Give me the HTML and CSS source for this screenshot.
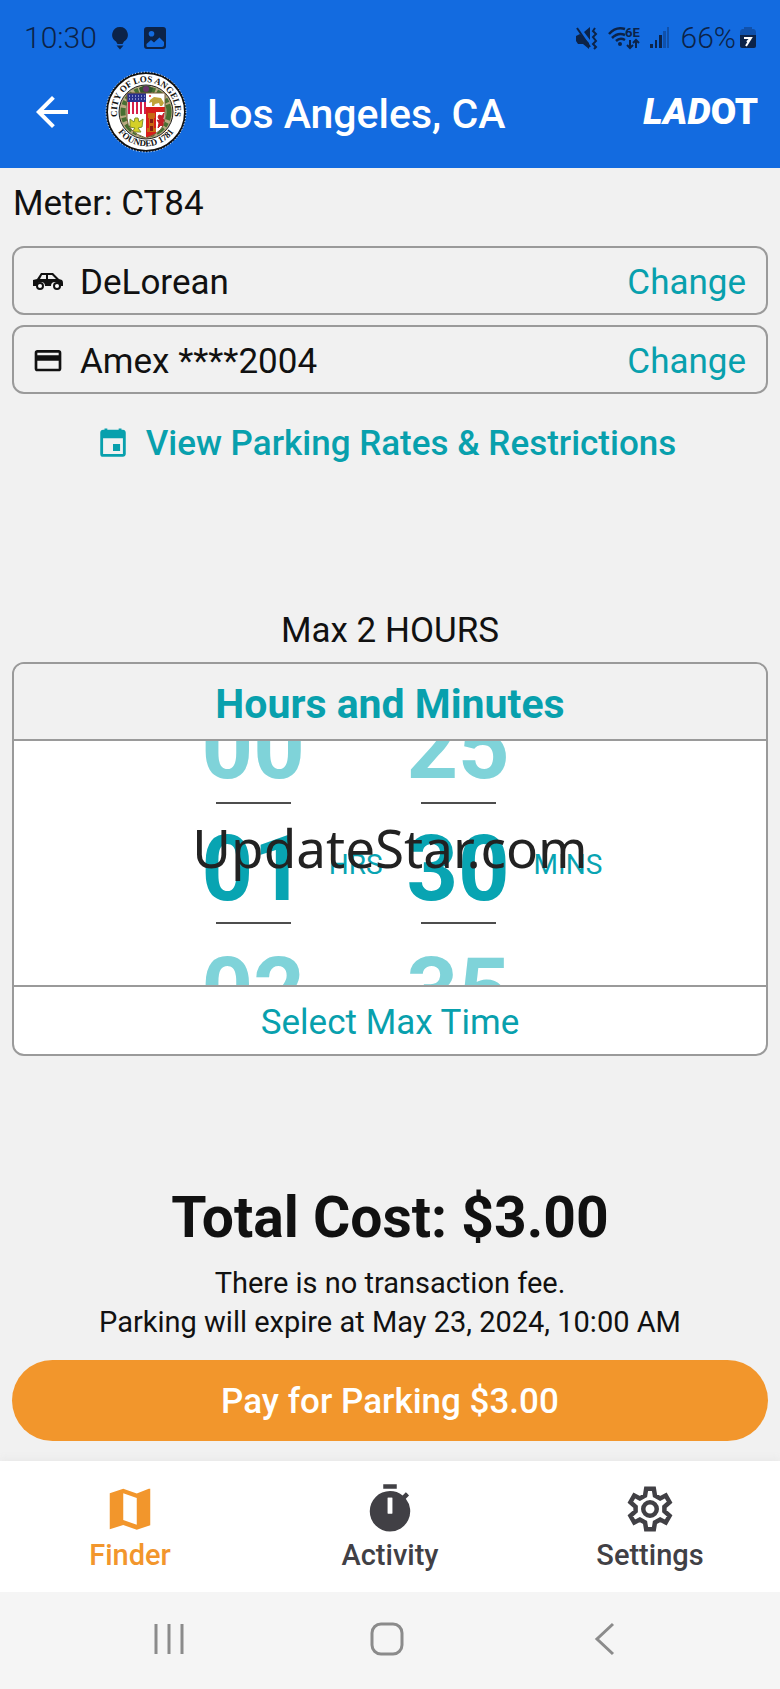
FILE: index.html
```html
<!DOCTYPE html>
<html lang="en">
<head>
<meta charset="utf-8">
<meta name="viewport" content="width=device-width, initial-scale=1">
<title>Pay for Parking</title>
<link rel="stylesheet" href="styles.css">
</head>
<body>
<div class="app">
  <header class="header">
    <div class="status">
      <div class="status-side">
        <span class="clock">10:30</span>
        <svg class="status-icon bulb" width="16" height="24" viewBox="0 0 16 24"><path d="M8 1a7.800 7.800 0 0 0-4 14.500L5.500 18h5L12 15.500A7.800 7.800 0 0 0 8 1zM4.500 19.500h7L8 23.500z"/></svg>
        <svg class="status-icon" width="24" height="24" viewBox="0 0 24 24"><path fill-rule="evenodd" d="M4 1h16a3 3 0 0 1 3 3v16a3 3 0 0 1-3 3H4a3 3 0 0 1-3-3V4a3 3 0 0 1 3-3zM3.500 19.500c0 1 .5 1.500 1.500 1.500h14c1 0 2-.7 2-2v-3l-4.500-4.500-5.500 5-3-2.500-4.500 4zM8.500 5a2.800 2.800 0 1 0 0 5.600 2.800 2.800 0 0 0 0-5.600z"/></svg>
      </div>
      <div class="status-side status-right">
        <svg class="status-icon" width="24" height="24" viewBox="0 0 24 24"><path d="M1 10l4-2 9 9v6l-6-5H3l-2-3zM9 6l6-5v13z"/><path d="M2 2l13 19" fill="none" stroke="#0c2348" stroke-width="2"/><path d="M20 2l-2 3 3 3-3 3 3 4-3 3 3 3-2 2" fill="none" stroke="#0c2348" stroke-width="2"/></svg>
        <svg class="status-icon wifi" width="32" height="24" viewBox="0 0 32 24"><g fill="none" stroke="#0c2348" stroke-width="2.500"><path d="M1 8Q8 0 17 3M4 12q6-6 13-3M8 15q4-4 9-1"/><path d="M22 14v8m-3-3 3 3 3-3M28 22v-8m-3 3 3-3 3 3" stroke-width="2"/></g><circle cx="12" cy="18" r="2"/><text x="17" y="11" font-size="13">6E</text></svg>
        <svg class="status-icon" width="21" height="24" viewBox="0 0 21 24"><path d="M1 18h3v4H1zM6 14h2v8H6zM10 9h3v13h-3z"/><path d="M14 5h3v17h-3zM18 1h2v21h-2z" opacity=".35"/></svg>
        <span class="charge">
          <span class="clock">66%</span>
          <svg class="status-icon" width="16" height="24" viewBox="0 0 16 24"><path d="M4 1h8v2h2q2 1 2 3v4H0V6q0-2 2-3h2z" opacity=".35"/><path d="M0 9h16v11q0 2-2 2H2q-2 0-2-2z"/><path d="M4 12h7l-5 8M11 12l-4 4" fill="none" stroke="#fff" stroke-width="2"/></svg>
        </span>
      </div>
    </div>
    <div class="titlebar">
      <button class="back" type="button" aria-label="Back"><svg width="48" height="48" viewBox="0 0 24 24" fill="#fff"><path d="M20 11H7.830l5.590-5.590L12 4l-8 8 8 8 1.410-1.410L7.830 13H20z"/></svg></button>
      <svg class="seal" width="82" height="82" viewBox="0 0 82 82" role="img" aria-label="Seal of the City of Los Angeles">
        <defs>
          <path id="arc-top" d="M12.500 45.500A29 29 0 1 1 69.500 45.500"/>
          <path id="arc-bottom" d="M7.500 49A34.500 34.500 0 0 0 74.500 49"/>
          <clipPath id="shield"><path d="M22 22h38v25q0 14-19 20Q22 61 22 47z"/></clipPath>
        </defs>
        <circle cx="41" cy="41" r="39" fill="#fff" stroke="#111" stroke-width="2"/>
        <circle cx="41" cy="41" r="40" fill="none" stroke="#fff" stroke-dasharray="1 2"/>
        <circle cx="41" cy="41" r="27" fill="#b9a982" stroke="#222"/>
        <circle cx="41" cy="41" r="23" fill="none" stroke="#466f32" stroke-width="5" stroke-dasharray="8 3 4 2"/>
        <path d="M34 17q7-5 14 0l-2 6H36z" fill="#31552c"/><circle cx="41" cy="18" r="3" fill="#69336b"/>
        <g clip-path="url(#shield)">
          <path d="M22 22h38v46H22z" fill="#fff"/>
          <path d="M24 30v13M28 30v13M32 30v13M36 30v13M40 30v13" stroke="#d6204a" stroke-width="2"/>
          <path d="M22 22h19v9H22z" fill="#28308d"/>
          <path d="M24 25h16M24 28h16" stroke="#dfe3ff" stroke-dasharray="1 2"/>
          <path d="M45 29l4-3 7 1 3 5-2 3h-2l-1-3-4 1-1 2h-2v-4l-3 1z" fill="#c0a43a"/>
          <circle cx="45" cy="25" r="1" fill="#d22"/>
          <path d="M41 36h20v5H51v25H41z" fill="#d81e1a"/>
          <path d="M43 42h7v5h-1v10h2v4h-9v-4h2V47h-1z" fill="#c76a13"/><path d="M45 48h3v4h-3zM45 55h3v5h-3z" fill="#861d13"/>
          <path d="M54 44l3 1 2-3-1 6 2 2-2 1 1 6-3-3-3 3 1-5-2-3 3 1-2-4z" fill="#c31f28" stroke="#c31f28"/>
          <path d="M25 48l4 3 1-4h3l1 4 4-3-1 8-4 1 3 4H27l3-4-5-1z" fill="#d4d128" stroke="#7f902b"/>
        </g>
        <path d="M22 22h38v25q0 14-19 20Q22 61 22 47z" fill="none" stroke="#785c38"/>
        <text class="seal-text"><textPath href="#arc-top" startOffset="50%">CITY OF LOS ANGELES</textPath></text>
        <text class="seal-text"><textPath href="#arc-bottom" startOffset="50%">FOUNDED 1781</textPath></text>
      </svg>
      <h1 class="title">Los Angeles, CA</h1>
      <span class="ladot"><i>LAD</i>OT</span>
    </div>
  </header>

  <main class="content">
    <p class="meter">Meter: CT84</p>
    <section class="option">
      <svg width="32" height="32" viewBox="0 0 32 32"><path fill="#111" fill-rule="evenodd" d="M1 13l4-1 4-6h12l6 6 3 1q1 1 1 3v3h-4a4 4 0 0 0-8 0h-6a4 4 0 0 0-8 0H1zM10 8l-2 4h6V8zm6 0v4h8l-4-4z"/><g fill="#fff" stroke="#111" stroke-width="2"><circle cx="8" cy="19" r="3"/><circle cx="25" cy="19" r="3"/></g></svg>
      <span class="option-name">DeLorean</span>
      <button class="link" type="button" aria-label="Change vehicle">Change</button>
    </section>
    <section class="option">
      <svg width="32" height="32" viewBox="0 0 24 24"><path fill="#111" d="M20 3H4c-1.110 0-1.990.890-1.990 2L2 17c0 1.110.890 2 2 2h16c1.110 0 2-.890 2-2V5c0-1.110-.890-2-2-2zm0 14H4v-6h16v6zm0-10H4V5h16v2z"/></svg>
      <span class="option-name">Amex ****2004</span>
      <button class="link" type="button" aria-label="Change payment card">Change</button>
    </section>
    <a class="rates" href="#rates">
      <svg width="34" height="34" viewBox="0 0 24 24" fill="#08a0ad"><path d="M17 12h-5v5h5v-5zM16 1v1H8V1H6v1H5c-1.110 0-1.990.9-1.990 2L3 19a2 2 0 0 0 2 2h14c1.100 0 2-.9 2-2V4c0-1.100-.9-2-2-2h-1V1h-2zm3 18H5V8h14v11z"/></svg>
      <span>View Parking Rates &amp; Restrictions</span>
    </a>

    <p class="max">Max 2 HOURS</p>
    <section class="picker">
      <h2 class="picker-title">Hours and Minutes</h2>
      <div class="wheels">
        <ul class="wheel" aria-label="Hours"><li>00</li><li class="current">01</li><li>02</li></ul>
        <span class="unit">HRS</span>
        <ul class="wheel" aria-label="Minutes"><li>25</li><li class="current">30</li><li>35</li></ul>
        <span class="unit">MINS</span>
        <span class="watermark">UpdateStar.com</span>
      </div>
      <button class="select-max" type="button">Select Max Time</button>
    </section>

    <p class="total">Total Cost: $3.00</p>
    <p class="note">There is no transaction fee.<br>Parking will expire at May 23, 2024, 10:00 AM</p>
    <button class="pay" type="button">Pay for Parking $3.00</button>
  </main>

  <nav class="tabs" aria-label="Main">
    <a class="tab active" href="#finder"><svg width="54" height="54" viewBox="0 0 24 24" fill="currentColor"><path d="M20.500 3l-.16.030L15 5.100 9 3 3 5.020V21l6-1.900 6 2.100 6-2V3zM15 19l-6-2.110V5l6 2.110V19z"/></svg><span>Finder</span></a>
    <a class="tab" href="#activity"><svg width="54" height="54" viewBox="0 0 24 24" fill="currentColor"><path d="M15 1H9v2h6V1zm-4 13h2V7h-2v7zm8.030-6.610 1.420-1.420c-.430-.510-.900-.990-1.410-1.410l-1.420 1.420A8.960 8.960 0 0 0 12 4a9 9 0 0 0 0 18 9 9 0 0 0 7.030-14.610z" fill-rule="evenodd"/><path d="M11 7h2v7h-2z" fill="#fff"/></svg><span>Activity</span></a>
    <a class="tab" href="#settings"><svg width="54" height="54" viewBox="0 0 24 24" fill="none" stroke="currentColor" stroke-width="2"><path d="M10.300 3h3.400l.5 3 2.300 1.300L19 6l1.700 3-2.300 2v2l2.300 2-1.700 3-2.500-1.300-2.300 1.300-.5 3h-3.400l-.5-3-2.300-1.300L5 18l-1.700-3 2.300-2v-2L3.300 9 5 6l2.500 1.300L9.800 6z"/><circle cx="12" cy="12" r="3"/></svg><span>Settings</span></a>
  </nav>

  <div class="system">
    <button type="button" aria-label="Recent apps"><svg width="36" height="36" viewBox="0 0 36 36"><path d="M5 3v30M18 3v30M31 3v30"/></svg></button>
    <button type="button" aria-label="Home"><svg width="36" height="36" viewBox="0 0 36 36"><rect x="3" y="3" width="30" height="30" rx="9"/></svg></button>
    <button type="button" aria-label="Go back"><svg width="36" height="36" viewBox="0 0 36 36"><path d="M26 3L10 18l16 15"/></svg></button>
  </div>
</div>
</body>
</html>
```
FILE: styles.css
```css
* { box-sizing: border-box; }
body, h1, h2, p, ul { margin: 0; padding: 0; }
body {
  background: #f1f1f1;
  color: #111;
  font-family: Roboto, "Liberation Sans", sans-serif;
  font-size: 35px;
  line-height: 40px;
}
button {
  border: 0;
  padding: 0;
  background: none;
  color: inherit;
  font: inherit;
  cursor: pointer;
}
a { color: inherit; text-decoration: none; }
svg { display: block; flex: none; }
.app { display: flex; flex-direction: column; min-height: 100vh; }

.header { background: #136be0; padding: 17px 22px 7px 24px; }
.status { display: flex; justify-content: space-between; padding-right: 2px; }
.status-side { display: flex; align-items: center; gap: 15px; height: 42px; color: #0c2348; }
.status-right { gap: 9px; }
.charge { display: flex; align-items: center; gap: 4px; padding-left: 2px; }
.status-icon { fill: #0c2348; }
.wifi text { font-family: Roboto, sans-serif; font-weight: 700; }
.clock { font-size: 30px; font-weight: 300; }
.titlebar { display: flex; align-items: center; height: 102px; padding: 4px 0 0 4px; color: #fff; }
.seal { margin-left: 29px; }
.seal-text {
  fill: #111;
  font-family: "Liberation Serif", serif;
  font-size: 9px;
  font-weight: 700;
  text-anchor: middle;
}
.title { flex: 1; margin-left: 20px; padding-top: 4px; font-size: 41px; font-weight: 500; line-height: 48px; }
.ladot { font-size: 37px; font-weight: 900; line-height: 44px; }

.content { display: flex; flex-direction: column; padding: 0 12px 20px; }
.meter { padding: 16px 0 22px 1px; }
.option {
  display: flex;
  align-items: center;
  gap: 16px;
  height: 69px;
  margin-bottom: 10px;
  padding: 4px 20px 0 18px;
  border: 2px solid #9a9a9a;
  border-radius: 12px;
}
.option-name { flex: 1; }
.link { color: #08a0ad; }
.rates {
  display: flex;
  align-items: center;
  justify-content: center;
  gap: 16px;
  padding: 20px 8px 0 0;
  color: #08a0ad;
  font-weight: 500;
}
.max { margin-top: 147px; text-align: center; }
.picker {
  margin-top: 11px;
  overflow: hidden;
  border: 2px solid #9a9a9a;
  border-radius: 12px;
  background: #fff;
}
.picker-title {
  padding: 16px 0 11px;
  border-bottom: 2px solid #9a9a9a;
  background: #f1f1f1;
  color: #08a0ad;
  text-align: center;
  font-size: 41px;
  font-weight: 700;
  line-height: 48px;
}
.wheels {
  position: relative;
  display: flex;
  align-items: center;
  justify-content: center;
  gap: 24px;
  height: 244px;
  padding-left: 24px;
  overflow: hidden;
  color: #08a4b2;
}
.wheel { display: flex; flex-direction: column; align-items: center; width: 103px; list-style: none; }
.wheel li {
  display: flex;
  justify-content: center;
  width: 75px;
  height: 122px;
  padding-top: 11px;
  border: solid transparent;
  border-width: 2px 0;
  color: #7fd3d9;
  font-size: 90px;
  font-weight: 700;
  line-height: 110px;
}
.wheel .current { border-color: #4d4d4d; color: #08a4b2; }
.unit { padding-top: 4px; font-size: 28px; }
.watermark {
  position: absolute;
  inset: 0;
  display: flex;
  align-items: center;
  justify-content: center;
  padding-bottom: 30px;
  color: #222;
  font-family: "Noto Sans", sans-serif;
  font-size: 53px;
}
.select-max {
  display: block;
  width: 100%;
  height: 69px;
  padding-top: 4px;
  border-top: 2px solid #9a9a9a;
  color: #08a0ad;
}
.total { margin-top: 129px; text-align: center; font-size: 57px; font-weight: 700; line-height: 66px; }
.note { margin: 13px 0 18px; text-align: center; font-size: 29px; line-height: 39px; }
.pay { height: 81px; padding-top: 2px; border-radius: 41px; background: #f2962c; color: #fff; font-weight: 500; }

.tabs { display: flex; height: 131px; background: #fff; box-shadow: 0 -2px 8px #e8e8e8; }
.tab {
  flex: 1;
  display: flex;
  flex-direction: column;
  align-items: center;
  padding-top: 21px;
  color: #414045;
  font-size: 29px;
  font-weight: 500;
  line-height: 38px;
}
.active { color: #f2962c; }
.system { flex: 1; display: flex; justify-content: center; gap: 182px; min-height: 97px; padding: 0 6px 4px 0; background: #f5f5f5; }
.system svg { fill: none; stroke: #8b8b8b; stroke-width: 3; }
```
